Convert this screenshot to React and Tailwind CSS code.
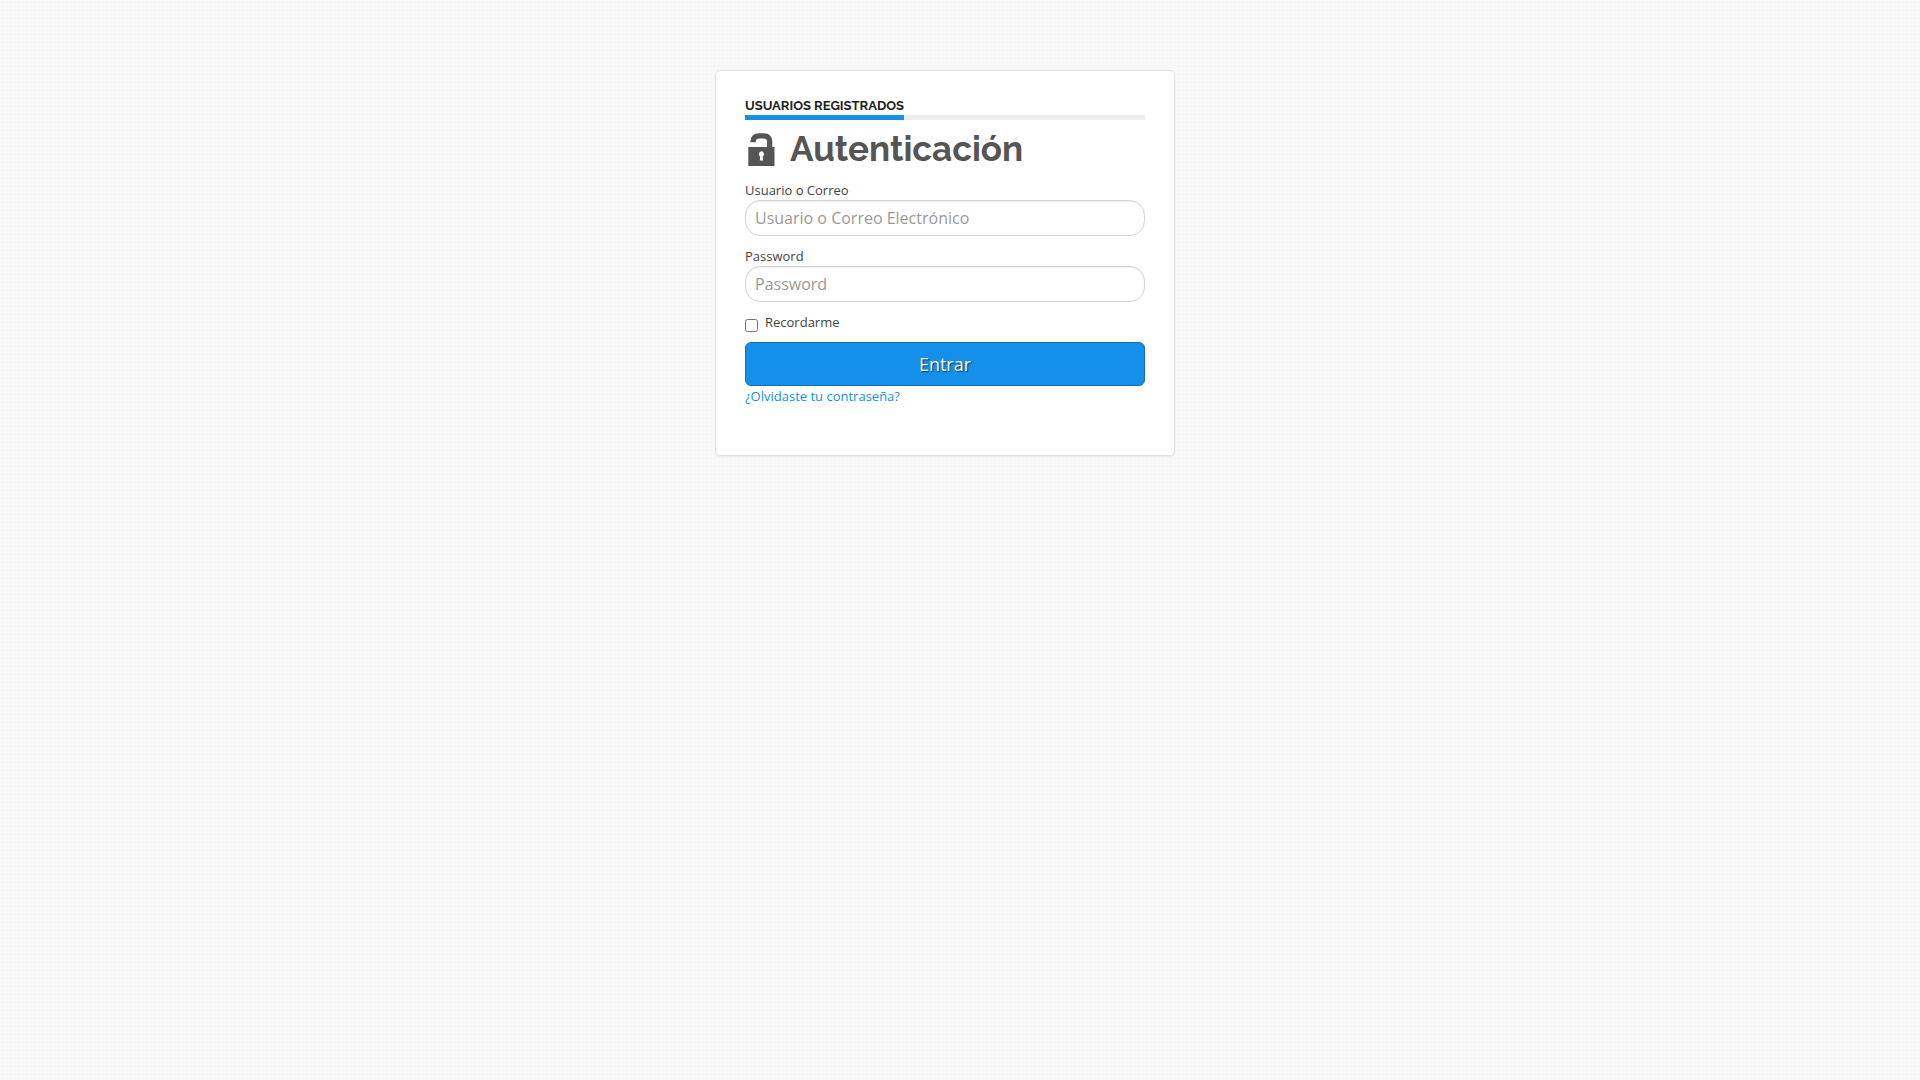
import React, { useState } from 'react';

const UnlockIcon = () => (
    <svg viewBox="0 0 27 33" className="w-[27px] h-[33px] shrink-0" fill="#555555" aria-hidden="true">
        <path d="M2.5 9.2V8.5C2.5 3.5 6 0.3 11 0.3H16C21 0.3 24.3 3.5 24.3 8.5V14H19V8.5C19 6.4 17.8 5.4 16 5.4H11C9 5.4 7.8 6.4 7.6 9.2Z" />
        <path
            fillRule="evenodd"
            d="M0.3 14H26.5V33H0.3ZM13.4 18.3A2.8 2.8 0 0 0 12.2 23.5L11.8 27.6H15.2L14.7 23.5A2.8 2.8 0 0 0 13.4 18.3Z"
        />
    </svg>
);

const Field = ({ id, label, ...props }) => (
    <div className="flex flex-col">
        <label htmlFor={id} className="text-[13px] leading-5 text-[#444444]">{label}</label>
        <input
            id={id}
            className="w-full h-9 px-[9px] text-base text-[#555555] placeholder:text-[#999999] bg-white border border-[#d4d4d4] rounded-[15px] shadow-[inset_0_1px_1px_rgba(0,0,0,0.075)] outline-none focus:border-[#1590ea]"
            {...props}
        />
    </div>
);

const App = () => {
    const [remember, setRemember] = useState(false);

    return (
        <div className="min-h-screen bg-[#f7f7f7] bg-[linear-gradient(90deg,rgba(255,255,255,0.25)_1px,transparent_1px),linear-gradient(rgba(255,255,255,0.25)_1px,transparent_1px)] bg-[size:4px_4px] pt-[70px] pr-[30px] font-['Open_Sans','Noto_Sans',sans-serif] text-[#444444]">
            <main className="w-full max-w-[460px] mx-auto bg-white border border-[#e3e3e3] rounded-[5px] shadow-[0_1px_2px_rgba(0,0,0,0.06)] px-[29px] pt-[25px] pb-[49px]">
                <div className="flex">
                    <h4 className="h-6 border-b-[5px] border-[#1590ea] font-['Raleway','Lato',sans-serif] text-[13px] leading-5 font-bold text-[#222222] uppercase whitespace-nowrap">
                        Usuarios registrados
                    </h4>
                    <div className="flex-1 border-b-[5px] border-[#eeeeee]" />
                </div>

                <h1 className="flex items-center gap-[15px] h-[60px] pl-[3px] pb-[2px] font-['Raleway','Lato',sans-serif] text-[35px] font-bold text-[#555555]">
                    <UnlockIcon />
                    Autenticación
                </h1>

                <form onSubmit={(e) => e.preventDefault()}>
                    <div className="flex flex-col gap-[10px]">
                        <Field id="login" label="Usuario o Correo" type="text" placeholder="Usuario o Correo Electrónico" />
                        <Field id="password" label="Password" type="password" placeholder="Password" />
                    </div>

                    <div className="flex items-start gap-[7px] mt-[10px]">
                        <input
                            id="remember"
                            type="checkbox"
                            className="w-[13px] h-[13px] mt-[7px]"
                            checked={remember}
                            onChange={(e) => setRemember(e.target.checked)}
                        />
                        <label htmlFor="remember" className="text-[13px] leading-5">Recordarme</label>
                    </div>

                    <button
                        type="submit"
                        className="block w-full h-11 mt-[10px] bg-[#1590ea] hover:bg-[#1180d2] border border-[#0f70b7] rounded-md text-lg text-white [text-shadow:1px_1px_1px_rgba(0,0,0,0.6)] cursor-pointer"
                    >
                        Entrar
                    </button>
                </form>

                <a href="#recuperar" className="block w-fit text-[13px] leading-5 text-[#1590ea] hover:underline">
                    ¿Olvidaste tu contraseña?
                </a>
            </main>
        </div>
    );
};

export default App;
